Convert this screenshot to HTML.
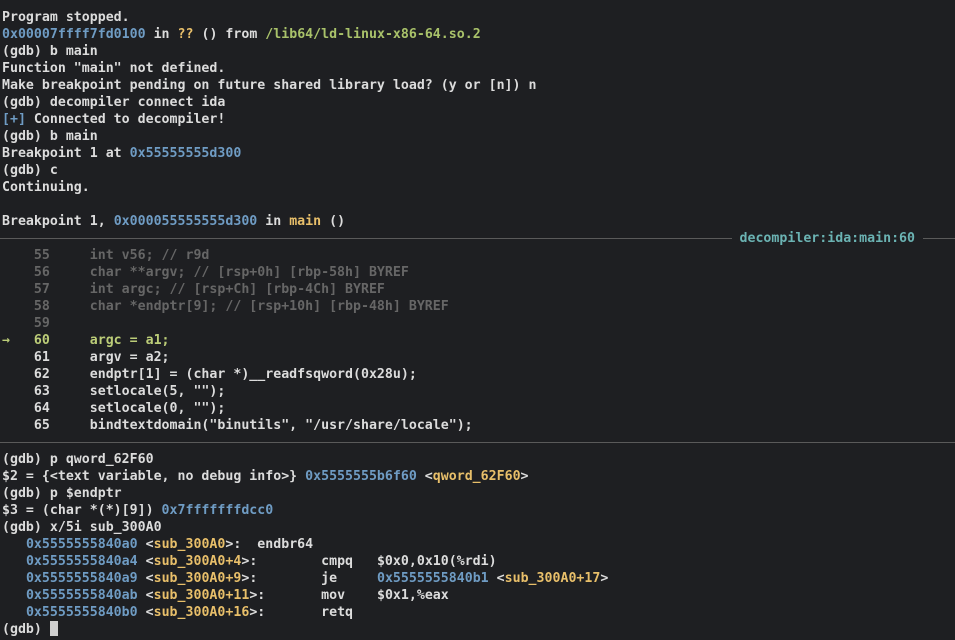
<!DOCTYPE html>
<html><head><meta charset="utf-8"><style>
html,body{margin:0;padding:0;background:#1e1f22;width:955px;height:640px;overflow:hidden}
pre{margin:0;padding:9px 0 0 2px;font-family:"DejaVu Sans Mono","Liberation Mono",monospace;font-size:13.25px;line-height:17px;font-weight:bold;color:#dcdcdc;white-space:pre}
.b{color:#6f9cc4}.y{color:#e8bf6a}.g{color:#a9c26a}.d{color:#666}.c{color:#bccd78}.t{color:#6bb3b3}
.sep{display:flex;align-items:center;height:17px;margin-left:-2px}
.sep i{flex:1;height:1px;background:#5a5a5a}
.sep span{padding:0 8px}
.cur{display:inline-block;width:8px;height:15px;background:#cfcfcf;vertical-align:-3px}
</style></head><body><pre>Program stopped.
<span class="b">0x00007ffff7fd0100</span> in <span class="y">??</span> () from <span class="g">/lib64/ld-linux-x86-64.so.2</span>
(gdb) b main
Function "main" not defined.
Make breakpoint pending on future shared library load? (y or [n]) n
(gdb) decompiler connect ida
<span class="b">[+]</span> Connected to decompiler!
(gdb) b main
Breakpoint 1 at <span class="b">0x55555555d300</span>
(gdb) c
Continuing.

Breakpoint 1, <span class="b">0x000055555555d300</span> in <span class="y">main</span> ()
<div class="sep"><i></i><span class="t">decompiler:ida:main:60</span><i style="flex:0 0 32px"></i></div><span class="d">    55     int v56; // r9d
    56     char **argv; // [rsp+0h] [rbp-58h] BYREF
    57     int argc; // [rsp+Ch] [rbp-4Ch] BYREF
    58     char *endptr[9]; // [rsp+10h] [rbp-48h] BYREF
    59</span>
<span class="c">→   60     argc = a1;</span>
    61     argv = a2;
    62     endptr[1] = (char *)__readfsqword(0x28u);
    63     setlocale(5, "");
    64     setlocale(0, "");
    65     bindtextdomain("binutils", "/usr/share/locale");
<div class="sep"><i></i></div>(gdb) p qword_62F60
$2 = {&lt;text variable, no debug info&gt;} <span class="b">0x5555555b6f60</span> &lt;<span class="y">qword_62F60</span>&gt;
(gdb) p $endptr
$3 = (char *(*)[9]) <span class="b">0x7fffffffdcc0</span>
(gdb) x/5i sub_300A0
   <span class="b">0x5555555840a0</span> &lt;<span class="y">sub_300A0</span>&gt;:  endbr64
   <span class="b">0x5555555840a4</span> &lt;<span class="y">sub_300A0+4</span>&gt;:        cmpq   $0x0,0x10(%rdi)
   <span class="b">0x5555555840a9</span> &lt;<span class="y">sub_300A0+9</span>&gt;:        je     <span class="b">0x5555555840b1</span> &lt;<span class="y">sub_300A0+17</span>&gt;
   <span class="b">0x5555555840ab</span> &lt;<span class="y">sub_300A0+11</span>&gt;:       mov    $0x1,%eax
   <span class="b">0x5555555840b0</span> &lt;<span class="y">sub_300A0+16</span>&gt;:       retq
(gdb) <span class="cur"></span></pre></body></html>
